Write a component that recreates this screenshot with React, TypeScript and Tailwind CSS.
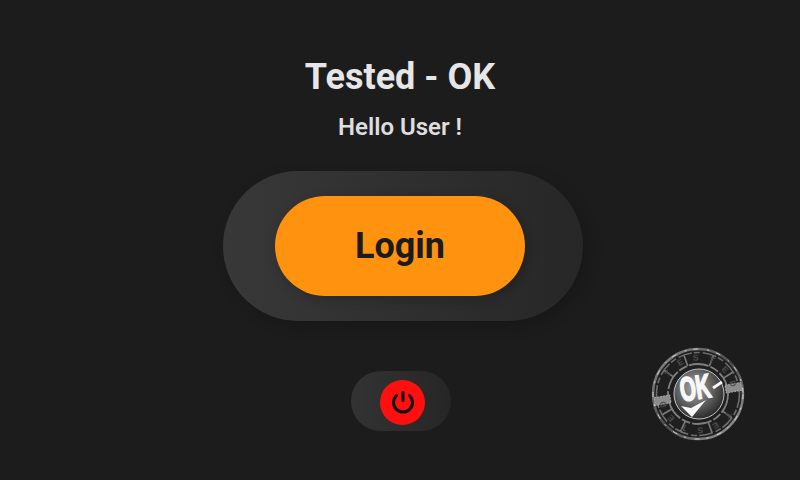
import React from "react";

function Stamp() {
  const spokes = [22, 58, 125, 160, 205, 240, 305, 340];
  const letters = ["T", "E", "S", "T", "E", "D", "", "T", "E", "S", "T", "E", "D", ""];
  return (
    <svg width="96" height="96" viewBox="0 0 96 96" className="block">
      <defs>
        <radialGradient id="hub" cx="42%" cy="38%" r="72%">
          <stop offset="0%" stopColor="#a8a8a8" />
          <stop offset="50%" stopColor="#606060" />
          <stop offset="100%" stopColor="#1a1a1a" />
        </radialGradient>
        <linearGradient id="rim" x1="0" y1="0" x2="1" y2="1">
          <stop offset="0%" stopColor="#8f8f8f" />
          <stop offset="50%" stopColor="#4a4a4a" />
          <stop offset="100%" stopColor="#a0a0a0" />
        </linearGradient>
      </defs>
      <circle cx="48" cy="48" r="45" fill="#1f1f1f" stroke="url(#rim)" strokeWidth="2.4" />
      <circle cx="48" cy="48" r="45" fill="none" stroke="#e0e0e0" strokeWidth="0.9" strokeDasharray="5 9 2 7" />
      <circle cx="48" cy="48" r="41.5" fill="none" stroke="#6e6e6e" strokeWidth="1.6" strokeDasharray="14 2 6 3" />
      <circle cx="48" cy="48" r="30" fill="none" stroke="#808080" strokeWidth="1.8" strokeDasharray="20 2 9 2" />
      {spokes.map((a) => (
        <line key={a} x1="48" y1="18" x2="48" y2="7" stroke="#7c7c7c" strokeWidth="1.6" transform={`rotate(${a} 48 48)`} />
      ))}
      <g transform="rotate(-10 48 48)">
        <rect x="4" y="44" width="16" height="8" fill="#8c8c8c" stroke="#bdbdbd" strokeWidth="0.7" strokeDasharray="2 1" />
        <rect x="76" y="44" width="16" height="8" fill="#8c8c8c" stroke="#bdbdbd" strokeWidth="0.7" strokeDasharray="2 1" />
      </g>
      {letters.map((l, i) => (
        <text
          key={i}
          x="48"
          y="14.5"
          textAnchor="middle"
          fontSize="8.5"
          fontWeight="700"
          fill="#4c4c4c"
          fontFamily="Liberation Sans, sans-serif"
          transform={`rotate(${i * (360 / 14) - 55} 48 48)`}
        >
          {l}
        </text>
      ))}
      <circle cx="49" cy="48" r="25" fill="url(#hub)" stroke="#c4c4c4" strokeWidth="1" />
      <text
        fontSize="31"
        fontWeight="700"
        fill="#f8f8f8"
        stroke="#f8f8f8"
        strokeWidth="1.6"
        textAnchor="middle"
        fontFamily="Liberation Sans, sans-serif"
        transform="translate(47 53) rotate(-9) scale(0.66 1.08)"
      >
        OK
      </text>
      <path d="M63 42 L72 36" stroke="#f8f8f8" strokeWidth="2.8" fill="none" />
      <path d="M31 60 L41 62 L56 54 L42 71 Z" fill="#f8f8f8" />
    </svg>
  );
}

export default function App() {
  return (
    <div className="relative w-[800px] h-[480px] overflow-hidden bg-[#1c1c1c] flex flex-col items-center font-['Roboto',sans-serif]">
      <h1 className="mt-[56px] h-[42px] leading-[42px] text-[36px] font-bold text-[#e6e6e6]">Tested - OK</h1>
      <p className="mt-[15px] h-[28px] leading-[28px] text-[24px] font-semibold text-[#dedede]">Hello User !</p>
      <div className="mt-[30px] ml-[6px] pr-[6px] w-[360px] h-[150px] rounded-[75px] flex items-center justify-center bg-gradient-to-r from-[#383838] to-[#272727] shadow-[5px_5px_12px_#181818]">
        <div className="w-[250px] h-[100px] rounded-[50px] bg-[#ff930f] flex items-center justify-center text-[36px] font-bold text-[#1b1b1b] shadow-[3px_3px_12px_rgba(0,0,0,0.22)]">
          Login
        </div>
      </div>
      <div className="mt-[50px] ml-[2px] pl-[3px] pt-[3px] w-[100px] h-[60px] rounded-[30px] flex items-center justify-center bg-gradient-to-r from-[#333333] to-[#262626]">
        <div className="w-[45px] h-[45px] rounded-full bg-[#ff0f0f] flex items-center justify-center">
          <svg width="22" height="22" viewBox="0 0 22 22" fill="none" stroke="#111111" strokeWidth="3" strokeLinecap="round" className="mb-[2px] overflow-visible">
            <path d="M11 1.5v8" />
            <path d="M4.6 4.5a9.5 9.5 0 1 0 12.8 0" />
          </svg>
        </div>
      </div>
      <div className="absolute left-[650px] top-[346px]">
        <Stamp />
      </div>
    </div>
  );
}
